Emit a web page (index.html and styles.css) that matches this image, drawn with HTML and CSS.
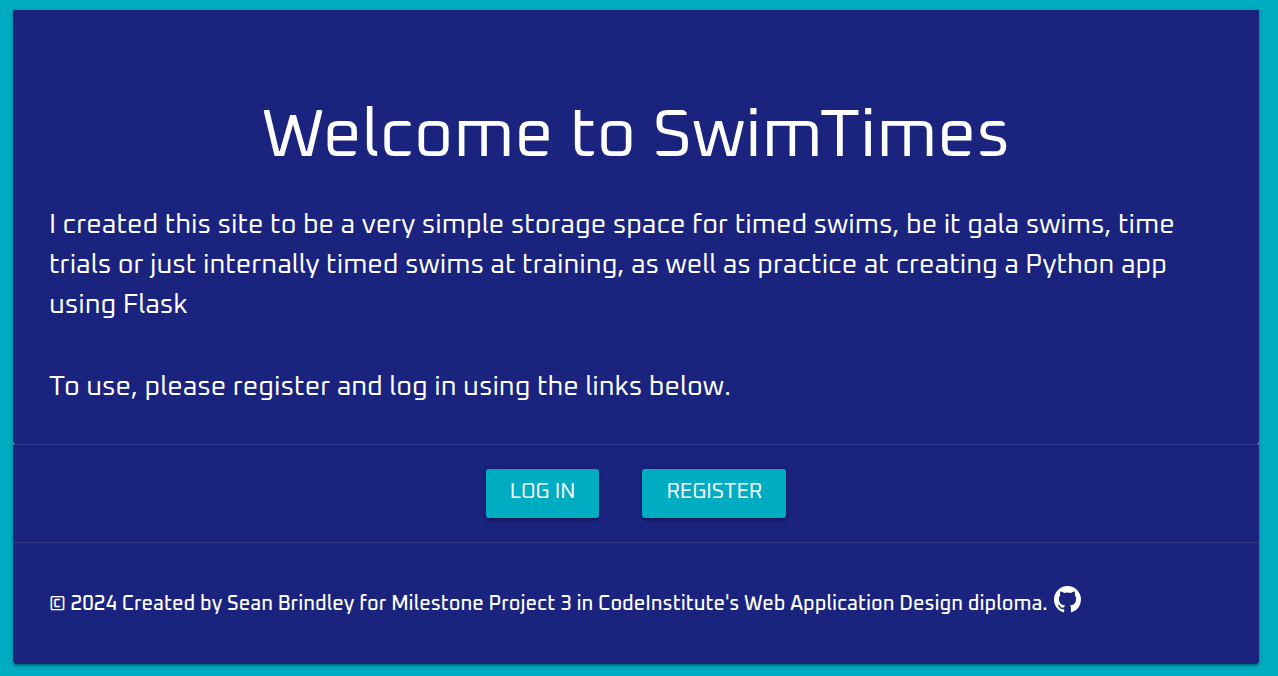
FILE: index.html
```html
<!DOCTYPE html>
<html lang="en">
<head>
<meta charset="utf-8">
<meta name="viewport" content="width=device-width, initial-scale=1">
<title>SwimTimes</title>
<link rel="stylesheet" href="styles.css">
</head>
<body>
<div class="card">
  <main class="card-content">
    <h1 class="title">Welcome to SwimTimes</h1>
    <p class="intro">I created this site to be a very simple storage space for timed swims, be it gala swims, time trials or just internally timed swims at training, as well as practice at creating a Python app using Flask</p>
    <p class="intro">To use, please register and log in using the links below.</p>
  </main>
  <nav class="card-action">
    <a class="btn" href="#login">Log in</a>
    <a class="btn" href="#register">Register</a>
  </nav>
  <footer class="card-footer">
    <p class="credit">© 2024 Created by Sean Brindley for Milestone Project 3 in CodeInstitute's Web Application Design diploma.</p>
    <a class="github" href="#github" aria-label="GitHub">
      <svg class="github-icon" viewBox="0 0 16 16" aria-hidden="true"><path fill="currentColor" d="M8 0C3.58 0 0 3.58 0 8c0 3.54 2.29 6.53 5.47 7.59.4.07.55-.17.55-.38 0-.19-.01-.82-.01-1.49-2.01.37-2.53-.49-2.69-.94-.09-.23-.48-.94-.82-1.13-.28-.15-.68-.52-.01-.53.63-.01 1.08.58 1.23.82.72 1.21 1.87.87 2.33.66.07-.52.28-.87.51-1.07-1.78-.2-3.64-.89-3.64-3.95 0-.87.31-1.59.82-2.15-.08-.2-.36-1.02.08-2.12 0 0 .67-.21 2.2.82a7.6 7.6 0 0 1 4 0c1.53-1.04 2.2-.82 2.2-.82.44 1.1.16 1.92.08 2.12.51.56.82 1.27.82 2.15 0 3.07-1.87 3.75-3.65 3.95.29.25.54.73.54 1.48 0 1.07-.01 1.93-.01 2.2 0 .21.15.46.55.38A8.01 8.01 0 0 0 16 8c0-4.42-3.58-8-8-8z"/></svg>
    </a>
  </footer>
</div>
</body>
</html>
```
FILE: styles.css
```css
* { box-sizing: border-box; }
body {
  margin: 0;
  padding: 10px 19px 12px 13px;
  background: #00acc1;
  color: #fff;
  font-family: "Oxanium", "Inter", "Roboto", sans-serif;
}
.card {
  background: #fff;
  border-radius: 0 0 2px 2px;
  box-shadow: 0 2px 2px rgba(0, 0, 0, .14), 0 3px 1px -2px rgba(0, 0, 0, .12), 0 1px 5px rgba(0, 0, 0, .2);
}
.card-content,
.card-action,
.card-footer { background: #1a237e; }
.card-content { padding: 88px 36px 36px; border-radius: 0 0 2px 2px; }
.title {
  margin: 0 0 32px;
  font-size: 68px;
  font-weight: 400;
  line-height: 76px;
  text-align: center;
}
.intro { margin: 0 0 42px; font-size: 27px; line-height: 40px; }
.intro:last-child { margin-bottom: 0; }
.card-action {
  display: flex;
  justify-content: center;
  gap: 43px;
  padding: 24px;
  border-top: 1px solid #353c85;
  border-bottom: 1px solid #353c85;
}
.btn {
  height: 49px;
  padding: 0 24px;
  border-radius: 3px;
  background: #00acc1;
  box-shadow: 0 2px 2px rgba(0, 0, 0, .14), 0 3px 1px -2px rgba(0, 0, 0, .12), 0 1px 5px rgba(0, 0, 0, .2);
  color: #fff;
  font-size: 21px;
  line-height: 46px;
  text-decoration: none;
  text-transform: uppercase;
}
.card-footer {
  display: flex;
  align-items: flex-start;
  gap: 6px;
  padding: 43px 36px 46px;
  border-radius: 0 0 2px 2px;
}
.credit { margin: 5px 0 0; font-size: 20px; font-weight: 500; line-height: 27px; }
.github { display: flex; color: #fff; }
.github-icon { width: 27px; height: 27px; }
```
